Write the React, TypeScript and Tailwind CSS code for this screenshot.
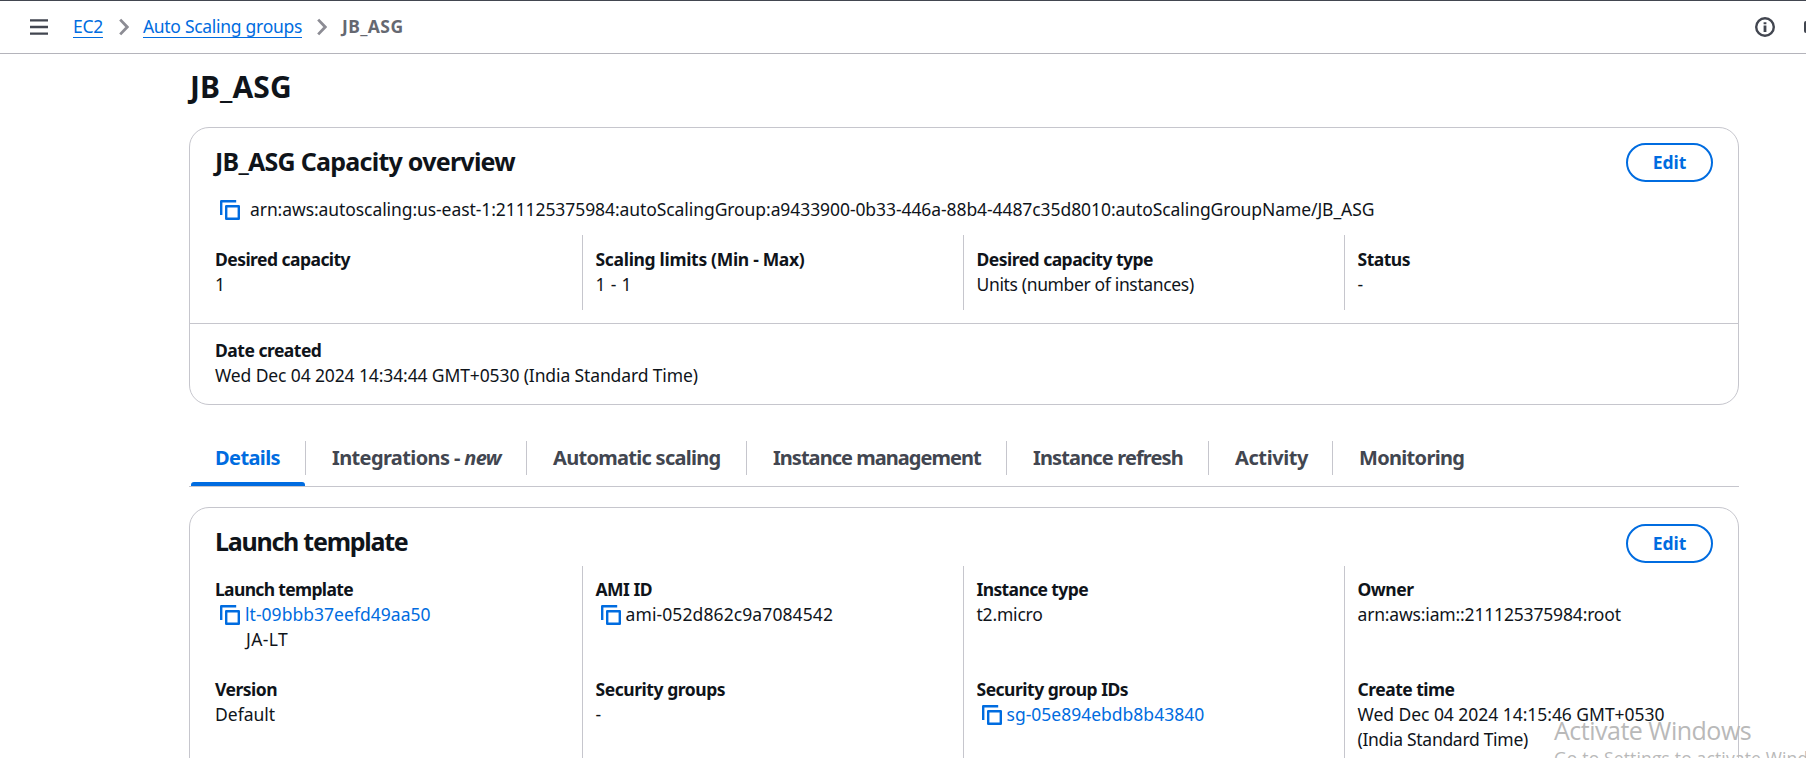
import type { ReactNode } from "react";

function CopyIcon({ className = "" }: { className?: string }) {
  return (
    <svg width="20" height="20" viewBox="0 0 20 20" fill="none" stroke="#006ce0" strokeWidth="2.4" strokeLinejoin="round" className={`shrink-0 ${className}`}>
      <path d="M16.2 1.2h-15v13.8" />
      <rect x="6.2" y="6.2" width="12.6" height="12.6" />
    </svg>
  );
}

function Chevron() {
  return (
    <svg width="10" height="18" viewBox="0 0 10 18" fill="none" stroke="#8c8c94" strokeWidth="2.8">
      <path d="M1.2 1.6 8.2 9l-7 7.4" />
    </svg>
  );
}

function EditButton() {
  return (
    <button className="flex h-[39px] w-[87px] items-center justify-center rounded-full border-2 border-[#006ce0] pb-px font-bold text-[#006ce0]">
      Edit
    </button>
  );
}

function Field({ label, labelClass = "tracking-[-0.5px]", children }: { label: string; labelClass?: string; children: ReactNode }) {
  return (
    <div>
      <div className={`font-bold ${labelClass}`}>{label}</div>
      {children}
    </div>
  );
}

function Column({ first, className = "", children }: { first?: boolean; className?: string; children: ReactNode }) {
  return (
    <div className={`${first ? "w-[392px] pl-[25px]" : "w-[381px] border-l border-[#c6c6cd] pl-[12.5px]"} shrink-0 ${className}`}>
      {children}
    </div>
  );
}

const tabs: { label: ReactNode; width: string; tracking: string; active?: boolean }[] = [
  { label: "Details", width: "w-[117px]", tracking: "tracking-[-0.6px]", active: true },
  { label: <>Integrations - <em>new</em></>, width: "w-[221px]", tracking: "tracking-[-0.62px]" },
  { label: "Automatic scaling", width: "w-[220px]", tracking: "tracking-[-0.71px]" },
  { label: "Instance management", width: "w-[260px]", tracking: "tracking-[-0.97px]" },
  { label: "Instance refresh", width: "w-[202px]", tracking: "tracking-[-0.86px]" },
  { label: "Activity", width: "w-[124px]", tracking: "tracking-[-0.4px]" },
  { label: "Monitoring", width: "w-[132px]", tracking: "tracking-[-0.68px]" },
];

export default function App() {
  return (
    <div className="relative h-[758px] w-[1806px] overflow-hidden bg-white [font-family:'Noto_Sans','Open_Sans',sans-serif] text-[17.5px] leading-[25px] text-[#0f141a]">
      <header className="flex h-[54px] items-center border-t border-b border-t-[#424650] border-b-[#b4b4bb] pl-[30px]">
        <svg width="18" height="18" viewBox="0 0 18 18" stroke="#424650" strokeWidth="2.4">
          <path d="M0 2.4h18M0 9h18M0 15.6h18" />
        </svg>
        <nav className="flex items-center pl-[25px]">
          <a className="border-b border-[#006ce0] leading-[21px] text-[#006ce0] tracking-[-0.3px]">EC2</a>
          <span className="pl-[16px]"><Chevron /></span>
          <a className="ml-[14px] border-b border-[#006ce0] leading-[21px] text-[#006ce0] tracking-[-0.29px]">Auto Scaling groups</a>
          <span className="pl-[15px]"><Chevron /></span>
          <span className="ml-[15px] pb-px font-bold text-[#656871] tracking-[0.4px]">JB_ASG</span>
        </nav>
        <div className="ml-auto flex items-center">
          <svg width="20" height="20" viewBox="0 0 20 20" fill="none">
            <circle cx="10" cy="10" r="8.8" stroke="#424650" strokeWidth="2.4" />
            <path d="M8.6 5.2h2.8v2H8.6zM8.6 8.6h2.8V15H8.6z" fill="#424650" />
          </svg>
          <div className="ml-[29px] h-[12px] w-[2px] rounded-l-[2px] bg-[#424650]" />
        </div>
      </header>

      <main className="ml-[189px] w-[1550px]">
        <h1 className="pt-[15px] pl-px text-[30px] leading-[36px] font-bold tracking-[0.1px]">JB_ASG</h1>

        <section className="mt-[22px] h-[278px] rounded-[20px] border border-[#c6c6cd]">
          <div className="flex items-start justify-between px-[25px] pt-[15px]">
            <h2 className="pt-[3px] text-[25px] leading-[30px] font-bold tracking-[-0.74px]">JB_ASG Capacity overview</h2>
            <EditButton />
          </div>
          <div className="mt-[15px] flex h-[25px] pl-[30px]">
            <CopyIcon className="mt-[3px]" />
            <span className="pl-[10px] tracking-[-0.08px]">
              arn:aws:autoscaling:us-east-1:211125375984:autoScalingGroup:a9433900-0b33-446a-88b4-4487c35d8010:autoScalingGroupName/JB_ASG
            </span>
          </div>
          <div className="mt-[13px] flex h-[75px]">
            <Column first className="pt-[12px]">
              <Field label="Desired capacity" labelClass="tracking-[-0.54px]">1</Field>
            </Column>
            <Column className="pt-[12px]">
              <Field label="Scaling limits (Min - Max)" labelClass="tracking-[-0.31px]"><span className="tracking-[0.3px]">1 - 1</span></Field>
            </Column>
            <Column className="pt-[12px]">
              <Field label="Desired capacity type" labelClass="tracking-[-0.52px]"><span className="tracking-[-0.35px]">Units (number of instances)</span></Field>
            </Column>
            <Column className="pt-[12px]">
              <Field label="Status">-</Field>
            </Column>
          </div>
          <div className="mt-[13px] border-t border-[#c6c6cd] pt-[14px] pl-[25px]">
            <Field label="Date created">
              <span className="tracking-[-0.12px]">Wed Dec 04 2024 14:34:44 GMT+0530 (India Standard Time)</span>
            </Field>
          </div>
        </section>

        <div className="mt-[36px] flex h-[46px] border-b border-[#c6c6cd] text-[20px]">
          {tabs.map((tab, i) => (
            <div key={i} className={`flex shrink-0 flex-col justify-between ${tab.width}`}>
              <div className={`h-[34px] pt-[4px] pl-[26px] font-bold whitespace-nowrap ${i === tabs.length - 1 ? "" : "border-r border-[#c6c6cd]"} ${tab.active ? "text-[#006ce0]" : "text-[#424650]"} ${tab.tracking}`}>
                {tab.label}
              </div>
              {tab.active && <div className="mr-px ml-[2px] h-[4px] rounded-t-[3px] bg-[#006ce0]" />}
            </div>
          ))}
        </div>

        <section className="mt-[20px] h-[300px] rounded-[20px] border border-[#c6c6cd]">
          <div className="flex h-[58px] items-start justify-between px-[25px] pt-[16px]">
            <h2 className="pt-[2px] text-[25px] leading-[30px] font-bold tracking-[-1.25px]">Launch template</h2>
            <EditButton />
          </div>
          <div className="flex h-[240px]">
            <Column first className="flex flex-col gap-[25px] pt-[11px]">
              <Field label="Launch template" labelClass="tracking-[-0.66px]">
                <div className="flex pl-[5px]">
                  <CopyIcon className="mt-[3px]" />
                  <a className="pl-[5px] text-[#006ce0] tracking-[0.03px]">lt-09bbb37eefd49aa50</a>
                </div>
                <div className="pl-[31px] tracking-[0.4px]">JA-LT</div>
              </Field>
              <Field label="Version">Default</Field>
            </Column>
            <Column className="flex flex-col gap-[50px] pt-[11px]">
              <Field label="AMI ID">
                <div className="flex pl-[5px]">
                  <CopyIcon className="mt-[3px]" />
                  <span className="pl-[5px] tracking-[0.1px]">ami-052d862c9a7084542</span>
                </div>
              </Field>
              <Field label="Security groups" labelClass="tracking-[-0.45px]">-</Field>
            </Column>
            <Column className="flex flex-col gap-[50px] pt-[11px]">
              <Field label="Instance type" labelClass="tracking-[-0.62px]"><span className="tracking-[-0.2px]">t2.micro</span></Field>
              <Field label="Security group IDs" labelClass="tracking-[-0.5px]">
                <div className="flex pl-[5px]">
                  <CopyIcon className="mt-[3px]" />
                  <a className="pl-[5px] text-[#006ce0]">sg-05e894ebdb8b43840</a>
                </div>
              </Field>
            </Column>
            <Column className="flex flex-col gap-[50px] pt-[11px]">
              <Field label="Owner"><span className="tracking-[-0.17px]">arn:aws:iam::211125375984:root</span></Field>
              <Field label="Create time">
                <div className="tracking-[-0.04px]">Wed Dec 04 2024 14:15:46 GMT+0530</div>
                <div className="tracking-[-0.3px]">(India Standard Time)</div>
              </Field>
            </Column>
          </div>
        </section>
      </main>

      <div className="pointer-events-none absolute top-[714px] left-[1554px] [font-family:'Open_Sans',sans-serif] whitespace-nowrap text-[#b9b9b9]">
        <div className="text-[25px] leading-[32px] tracking-[-0.5px]">Activate Windows</div>
        <div className="text-[17.5px] leading-[25px] tracking-[0.15px]">Go to Settings to activate Windows.</div>
      </div>
    </div>
  );
}
